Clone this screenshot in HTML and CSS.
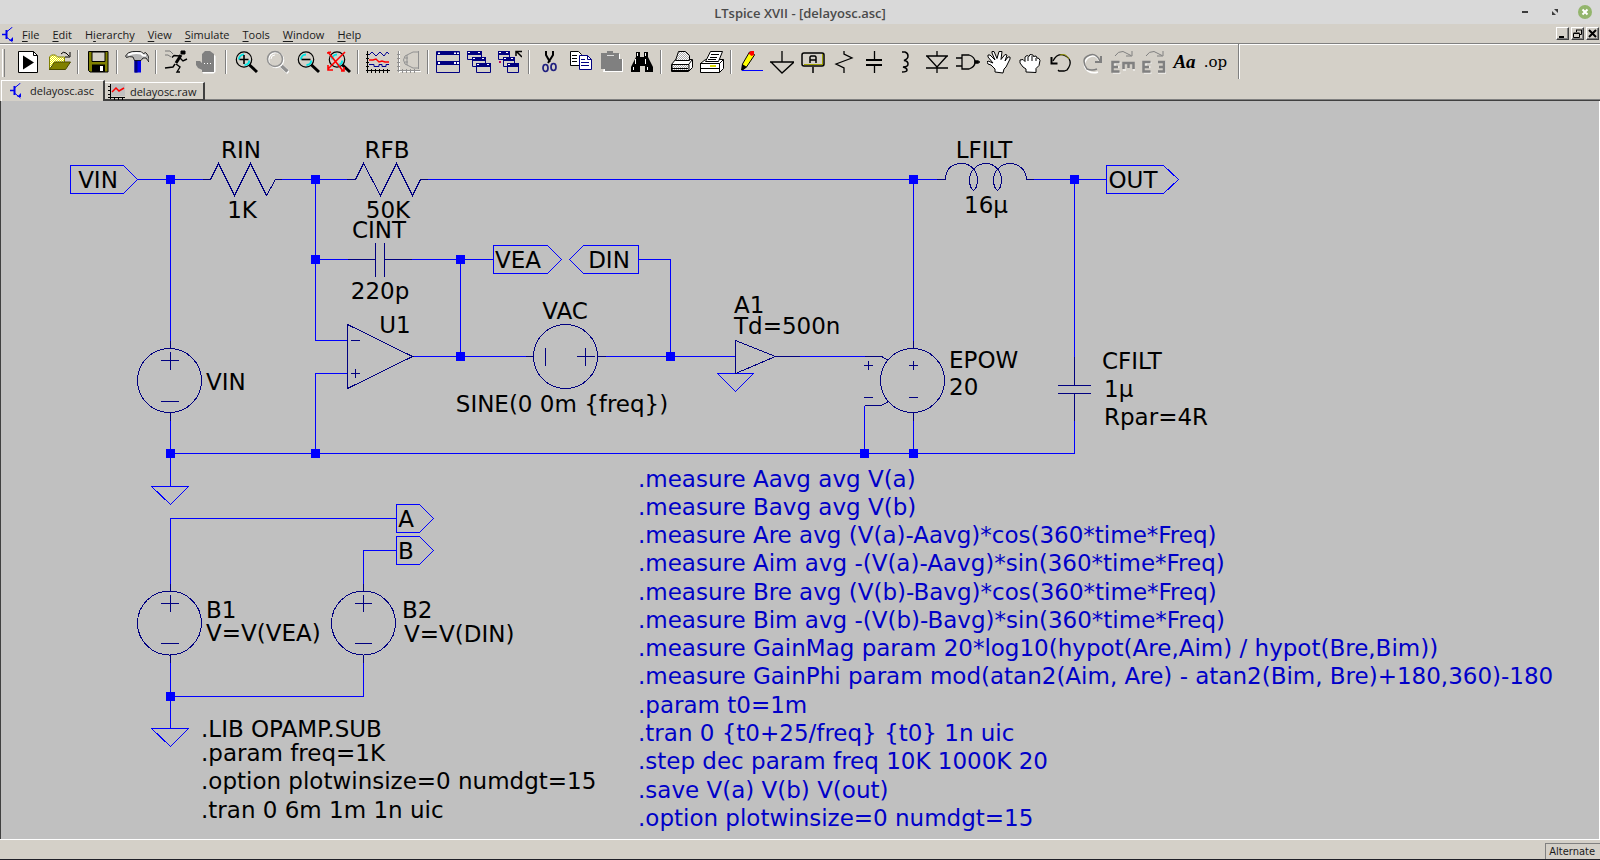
FILE: index.html
```html
<!DOCTYPE html>
<html lang="en">
<head>
<meta charset="utf-8">
<title>LTspice XVII - [delayosc.asc]</title>
<link rel="stylesheet" href="styles.css">
</head>
<body>
<header class="titlebar">
  <span class="titlebar-side"></span>
  <h1 class="title">LTspice XVII - [delayosc.asc]</h1>
  <div class="titlebar-side window-buttons">
    <button type="button" aria-label="Minimize"><svg width="14" height="14"><path d="M4 7h6" stroke="#3c3c3c" stroke-width="2"/></svg></button>
    <button type="button" aria-label="Restore"><svg width="14" height="14"><path d="M6 4h4v4zM4 6v4h4z" fill="#3c3c3c"/></svg></button>
    <button type="button" aria-label="Close"><svg width="14" height="14"><circle cx="7" cy="7" r="7" fill="#93b56c"/><path d="M4.500 4.500l5 5M9.500 4.500l-5 5" stroke="#fff" stroke-width="2"/></svg></button>
  </div>
</header>

<nav class="menubar" aria-label="Main menu">
  <svg class="doc-icon" width="14" height="16" viewBox="0 0 14 16"><use href="#transistor"/></svg>
  <button type="button"><u>F</u>ile</button>
  <button type="button"><u>E</u>dit</button>
  <button type="button">H<u>i</u>erarchy</button>
  <button type="button"><u>V</u>iew</button>
  <button type="button"><u>S</u>imulate</button>
  <button type="button"><u>T</u>ools</button>
  <button type="button"><u>W</u>indow</button>
  <button type="button"><u>H</u>elp</button>
  <div class="mdi-buttons">
    <button type="button" aria-label="Minimize document"><svg width="9" height="9"><path d="M1 7h5v2h-5z"/></svg></button>
    <button type="button" aria-label="Restore document"><svg width="9" height="9" fill="none" stroke="#000"><path d="M3.500 3V1M3 1h6M8.500 1v4.500H7"/><path d="M.5 4.500h6v4h-6zM.5 4h6"/></svg></button>
    <button type="button" aria-label="Close document"><svg width="9" height="9"><path d="M1 1l7 7M8 1l-7 7" stroke="#000" stroke-width="2"/></svg></button>
  </div>
</nav>

<svg class="defs" width="0" height="0" aria-hidden="true">
  <defs>
    <g id="transistor" fill="none" stroke="#0000f0">
      <path d="M0 7.500h4" stroke-width="1.500"/><path d="M4.500 3v9" stroke-width="2"/><path d="M4.500 5l6-5M4.500 10l6 5"/><path d="M7 14h4v-4z" fill="#0000f0" stroke="none"/>
    </g>
    <g id="lens-handle"><path d="M15 14.500l8 7.500" stroke="#000" stroke-width="3" fill="none"/></g>
    <g id="lens">
      <circle cx="10" cy="9.500" r="7.700" fill="#d4d0c8" stroke="#000" stroke-width="1.200"/>
      <path d="M5 9.500a5 5 0 0 1 5-5M10.500 15a5 5 0 0 0 4.800-4.500" stroke="#00e5e5" stroke-width="2" fill="none"/>
    </g>
    <pattern id="dots" width="2" height="2" patternUnits="userSpaceOnUse"><rect width="2" height="2" fill="#fff"/><path d="M0 0h1v1H0zM1 1h1v1H1z" fill="#aaa"/></pattern>
    <pattern id="yellow" width="2" height="2" patternUnits="userSpaceOnUse"><rect width="2" height="2" fill="#fff"/><path d="M0 0h1v1H0zM1 1h1v1H1z" fill="#f0f000"/></pattern>
  </defs>
</svg>

<div class="toolbar" role="toolbar" aria-label="Tools">
  <button type="button" aria-label="Run control"><svg class="icon"><path d="M2.500 1.500h15l4 4v17h-19z" fill="#fff" stroke="#000"/><path d="M17.500 1.500v4h4" fill="none" stroke="#000"/><path d="M7 5.500v14l11-7z"/></svg></button>
  <button type="button" aria-label="Open"><svg class="icon"><path d="M2.500 20V7l2-2h4l2 2h7v5" fill="url(#yellow)" stroke="#808000"/><path d="M2.500 19.500l5-7.500h16l-5 7.500z" fill="#808000" stroke="#4a4a00"/><path d="M14 4q2-3 5-1l3 3M23 2v5h-5" fill="none" stroke="#000"/></svg></button>
  <i class="sep"></i>
  <button type="button" aria-label="Save"><svg class="icon"><path d="M2.500 1.500h19.500v20.500h-18l-1.500-1.500z" fill="#808000" stroke="#000"/><path d="M6 2h13v9.500H6z" fill="#d4d0c8" stroke="#000"/><path d="M6 14.500h13v7.500H6z"/><path d="M14 16h3v5h-3z" fill="#fff"/></svg></button>
  <i class="sep"></i>
  <button type="button" aria-label="Control panel"><svg class="icon"><path d="M9.500 10h6.500v12.500h-6.500z" fill="#0000f0"/><path d="M9.500 10h3v12.500h-3z" fill="#000080"/><path d="M.5 6q2-4 7-4.500h8l3 2 2-1q4 3 3.500 9.500l-3-4h-3l-2 2.500H9.500L8 7Q4 6 1.500 7.500z" fill="#b4b4b4" stroke="#000" stroke-width=".8"/><path d="M3 5q6-3 13-1.500l2 2h3" stroke="#fff" stroke-width="2" fill="none"/></svg></button>
  <i class="sep"></i>
  <button type="button" aria-label="Run"><svg class="icon" fill="none" stroke="#000"><path d="M17 1h4v3h-4z" fill="#000"/><path d="M17 5l-5 8" stroke-width="3"/><path d="M16 6l-6-.5-2 2M16 8l3 3 4-2M11 14l-2 3-8 1M12 14l4 3-3 5h3" stroke-width="1.400"/><path d="M1 1h5l3 3M1 5h3l3 2" stroke="#777"/></svg></button>
  <button type="button" aria-label="Halt"><svg class="icon"><path d="M8 23.500l-1-3-5-4-.5-4h5l2 2V4l3-2h4l5 4v16l-2 1.500z" fill="#fff"/><path d="M7 22v-2l-4-2-2-3v-4h4l2 2V4l3-3h5l4 3v18z" fill="#808080"/><path d="M9 13.500h9" stroke="#fff" stroke-dasharray="1 2"/></svg></button>
  <i class="sep"></i>
  <button type="button" aria-label="Zoom in"><svg class="icon"><use href="#lens-handle"/><use href="#lens"/><path d="M5.500 9.500h9M10 5v9" stroke="#000" stroke-width="1.600"/></svg></button>
  <button type="button" aria-label="Pan"><svg class="icon" fill="none"><path d="M16 15.500l7.500 7" stroke="#fff" stroke-width="4"/><path d="M15 14.500l7.500 7" stroke="#909090" stroke-width="3.500"/><circle cx="11" cy="10" r="7.500" stroke="#fff" stroke-width="1.500"/><circle cx="10" cy="9" r="7.500" stroke="#909090" stroke-width="1.500"/><path d="M6 9a4 4 0 0 1 4-4" stroke="#fff"/></svg></button>
  <button type="button" aria-label="Zoom out"><svg class="icon"><use href="#lens-handle"/><use href="#lens"/><path d="M5.500 9.500h9" stroke="#000" stroke-width="1.600"/></svg></button>
  <button type="button" aria-label="Zoom full extents"><svg class="icon"><use href="#lens-handle"/><use href="#lens"/><path d="M1 2l15 19M18 2L1 19M0 3l4-1M1 15v5h5M14 21h3v-4" stroke="#f00" stroke-width="1.600" fill="none"/></svg></button>
  <i class="sep"></i>
  <button type="button" aria-label="Autorange"><svg class="icon" fill="none"><path d="M1.500 1v22M0 20.500h24M0 4.500h3M0 8.500h3M0 12.500h3M0 16.500h3M5.500 19v4M9.500 19v4M13.500 19v4M17.500 19v4M21.500 19v4" stroke="#000"/><path d="M3 5l3-3 4 4 4-4 4 4 3-4 2 2" stroke="#000090"/><path d="M3 10h4l3-1 3 3 3-1 3 1h4" stroke="#f00" stroke-width="1.500"/><path d="M3 14.500h5v2h5v-2h3v2h4v-2h3" stroke="#000090"/></svg></button>
  <button type="button" aria-label="Plot settings"><svg class="icon" fill="none" stroke="#fff"><path d="M2.500 1v22M1 21.500h23"/><path d="M1.500 1v21M0 20.500h23M0 4.500h3M0 8.500h3M0 12.500h3M0 16.500h3M5.500 19v4M9.500 19v4M13.500 19v4M17.500 19v4M21.500 1v18" stroke="#909090"/><path d="M21 2h-5l-8 4q-3 4 0 8l8 4h5M10 5v10M8 8h3M8 12h3" stroke="#909090"/></svg></button>
  <i class="sep"></i>
  <button type="button" aria-label="Tile windows"><svg class="icon"><path d="M.5 1.500h23v21H.5z" fill="#d4d0c8" stroke="#000080"/><path d="M1 2h22v3H1zM1 11h22v4H1z" fill="#000080"/><path d="M2 2.500h2v1.500H2zM18 2.500h2v1.500h-2zM21 2.500h2v1.500h-2zM2 12h2v2H2zM18 12h2v2h-2zM21 12h2v2h-2z" fill="#fff"/></svg></button>
  <button type="button" aria-label="Cascade windows"><svg class="icon"><g fill="#d4d0c8" stroke="#000080"><path d="M.5 1.500h14v8H.5z"/><path d="M5.500 7.500h13v9h-13z"/><path d="M9.500 13.500h14v9h-14z"/></g><path d="M0 1h15v4H0zM5 7h14v4H5zM9 13h15v4H9z" fill="#000080"/><path d="M1 2h2v1H1zM11 2h2v1h-2zM6 8h2v1H6zM15 8h2v1h-2zM10 14h2v1h-2zM20 14h2v1h-2z" fill="#fff"/></svg></button>
  <button type="button" aria-label="Close all windows"><svg class="icon"><g fill="#d4d0c8" stroke="#000080"><path d="M.5 1.500h11v8H.5z"/><path d="M5.500 7.500h11v9h-11z"/><path d="M9.500 13.500h11v9h-11z"/></g><path d="M0 1h12v4H0zM5 7h12v4H5zM9 13h12v4H9z" fill="#000080"/><path d="M1 2h2v1H1zM8 2h2v1H8zM6 8h2v1H6zM13 8h2v1h-2zM10 14h2v1h-2z" fill="#fff"/><path d="M1 11h2v2H1z" fill="#c00060"/><path d="M24 7l-5-5M18 6V1.500h6" fill="none" stroke="#000" stroke-width="1.500"/></svg></button>
  <i class="sep"></i>
  <button type="button" aria-label="Cut"><svg class="icon" fill="none"><path d="M9 1v4l4 7M16 1v4l-5 8" stroke="#000" stroke-width="2"/><ellipse cx="8.500" cy="18" rx="2.500" ry="3.500" stroke="#202080" stroke-width="1.700"/><ellipse cx="16.500" cy="17" rx="2.500" ry="3.500" stroke="#202080" stroke-width="1.700"/></svg></button>
  <button type="button" aria-label="Copy"><svg class="icon" fill="#fff"><path d="M2.500 1.500h8l3 3v11h-11z" stroke="#000"/><path d="M4 5.500h5M4 8.500h5M4 11.500h5" stroke="#000"/><path d="M11.500 5.500h8l4 4v10h-12z" stroke="#000080"/><path d="M19.500 5.500v4h4M13 9.500h4M13 12.500h8M13 15.500h8" stroke="#000080" fill="none"/></svg></button>
  <button type="button" aria-label="Paste"><svg class="icon"><path d="M4 22h20V9h-3V4H8" fill="#fff"/><path d="M2 3h6V1h6v2h6v6h3v12H6v-2H2z" fill="#808080"/><path d="M8 5.500h7" stroke="#ddd"/></svg></button>
  <button type="button" aria-label="Find"><svg class="icon"><path d="M6 2h4v5h4V2h4v5l3 6 2 4v5h-8v-6h-5v6H1v-5l2-4 3-6z"/><path d="M7 3h1v3H7zM15 3h1v3h-1zM5 9h1v5H5zM15 9h1v5h-1zM3 17h1v3H3zM17 17h1v3h-1z" fill="#fff"/></svg></button>
  <i class="sep"></i>
  <button type="button" aria-label="Print"><svg class="icon" stroke="#000"><path d="M2.500 14.500l4-5h17v8l-4 4h-17z" fill="#fff"/><path d="M6.500 10.500l3-9h7l4 4v5z" fill="url(#dots)"/><path d="M3 14.500h17v6H3z" fill="url(#dots)"/><path d="M3 18.500h16M20 14l3-4" fill="none"/></svg></button>
  <button type="button" aria-label="Print setup"><svg class="icon" stroke="#000"><path d="M.5 13.500l5-4h18v9l-4 4H.5z" fill="#fff"/><path d="M5.500 11.500l5-10h12l-4 10z" fill="#fff"/><path d="M11 4.500h8M10 7.500h7M8 9.500h8M0 13.500h19.500v9M19.500 13.500l4-4M0 18.500h19" fill="none"/><path d="M10 16h6" stroke="#d8d800" stroke-width="2"/></svg></button>
  <i class="sep"></i>
  <button type="button" aria-label="Draw wire"><svg class="icon"><path d="M2.500 20l1-6 7-12h3l2 3-8 12z" fill="#ff0" stroke="#000"/><path d="M3 14l5 3-5 4z"/><path d="M9.500 3.500L12 1h3v4l-2.500 1z" fill="#f00"/><path d="M3 20.500h21" stroke="#00f"/></svg></button>
  <button type="button" aria-label="Ground"><svg class="icon" fill="none" stroke="#000" stroke-width="1.300"><path d="M12 1v11M0 12h24l-12 11L1 12"/></svg></button>
  <button type="button" aria-label="Label net"><svg class="icon" fill="none"><rect x="1" y="3" width="22" height="13" rx="2" stroke="#000" stroke-width="1.500"/><path d="M21.500 4v11M3 14.500h18" stroke="#a0a000"/><path d="M9 13V7l1-1h4l1 1v6M9 10h6M12 17v6" stroke="#000" stroke-width="1.500"/></svg></button>
  <button type="button" aria-label="Resistor"><svg class="icon" fill="none" stroke="#000" stroke-width="1.300"><path d="M12 1v3l8 4-16 6 8 4v5"/></svg></button>
  <button type="button" aria-label="Capacitor"><svg class="icon" fill="none" stroke="#000" stroke-width="2"><path d="M3 10h16M3 15h16"/><path d="M11.500 1v9M11.500 15v8" stroke-width="1.300"/></svg></button>
  <button type="button" aria-label="Inductor"><svg class="icon" fill="none" stroke="#000" stroke-width="1.500"><path d="M8 2h3q3 1 3 4t-4 4.500q4 .5 4 3.500t-5 3q4 1 4 3t-5 2"/></svg></button>
  <button type="button" aria-label="Diode"><svg class="icon" fill="none" stroke="#000" stroke-width="1.300"><path d="M12 1v5M1 6h22M2 6l10 11L22 6M1 18h22M12 18v5"/></svg></button>
  <button type="button" aria-label="Component"><svg class="icon" fill="none" stroke="#000" stroke-width="1.300"><path d="M6 5h7q6 2 6 7t-6 7H6zM0 8h6M0 16h6M19 12h5"/><path d="M19 11h3v2h-3z" fill="#000"/></svg></button>
  <button type="button" aria-label="Move"><svg class="icon"><path d="M8 22v-3l-4-4-3-1-1-2 1-1 5 2-5-6V5h2l5 5-3-7V1.500h2l3 7 2-7h3l-1 8 4-5 2 .5-2 6 3-4h2v2l-4 8-2 2-1 4z" fill="#fff" stroke="#000"/></svg></button>
  <button type="button" aria-label="Drag"><svg class="icon"><path d="M8 22v-3l-3-2-3-4v-3l3-.5 2 2V7l2-1.500 2 1 1-2 3 .5.500 1.500 2.500-.5 1 2 2 .5 1 2-1 5-3 3v4z" fill="#fff" stroke="#000"/><path d="M10 7v4M14 6v5M18 8v3" stroke="#000"/></svg></button>
  <button type="button" aria-label="Undo"><svg class="icon" fill="none"><path d="M4 11q4-8 10-6t7 6-3 9l-3 1h-5l-1-1" stroke="#000" stroke-width="1.300"/><path d="M11 5q6-2 9 4" stroke="#909000"/><path d="M2.500 7v6.500h6" stroke="#000" stroke-width="2"/></svg></button>
  <button type="button" aria-label="Redo"><svg class="icon" fill="none"><path d="M20 12q-3-7-8-6t-7 6 3 9q5 3 10 1" stroke="#fff" stroke-width="1.500"/><path d="M20 11q-4-8-10-6t-6 6 3 8q5 2 10 0" stroke="#808080" stroke-width="1.500"/><path d="M21 6v6h-6" stroke="#808080" stroke-width="2"/></svg></button>
  <button type="button" aria-label="Rotate"><svg class="icon" fill="none"><path d="M2 23h7.500M9.500 13H4v4h4.500M25 13v7h-3M12 20h3" stroke="#fff"/><path d="M8.500 12H1.500v9.500h7M2 17h5M12.500 19v-6h10v6M17.500 12v6" stroke="#808080" stroke-width="2.500"/><path d="M4 6q3-5 8-4.500l8 4M21 1v5h-6" stroke="#808080"/></svg></button>
  <button type="button" aria-label="Mirror"><svg class="icon" fill="none"><path d="M2 23h7.500M9.500 13H4v4h4.500M24 11v12h-8" stroke="#fff"/><path d="M8.500 12H1.500v9.500h7M2 17h5M16 12h6v9.500h-6M22 17h-5" stroke="#808080" stroke-width="2.500"/><path d="M4 6q3-5 8-4.500l8 4M21 1v5h-6" stroke="#808080"/></svg></button>
  <button type="button" class="glyph glyph-text">Aa</button>
  <button type="button" class="glyph">.op</button>
  <i class="sep sep-end"></i>
</div>

<div class="tabs" role="tablist">
  <button type="button" class="tab tab-active" role="tab" aria-selected="true"><svg width="14" height="16" viewBox="0 0 14 16"><use href="#transistor"/></svg>delayosc.asc</button>
  <button type="button" class="tab" role="tab" aria-selected="false"><svg width="17" height="16" fill="none"><path d="M3 0h14v12H3z" fill="#c0c0c0"/><path d="M2.500 0v15M0 13.500h17M0 2.500h3M0 6.500h3M0 10.500h3M6.500 13v3M10.500 13v3M14.500 13v3" stroke="#000"/><path d="M4 8l4-4 3 3 5-3" stroke="#f00" stroke-width="1.500"/></svg>delayosc.raw</button>
  <span class="tab-rest"></span>
</div>

<main class="canvas">
<svg class="schematic" viewBox="2 101 1596 738" preserveAspectRatio="xMinYMin meet" role="img" aria-label="delayosc schematic">
  <g class="wire">
    <path d="M137.500 179.500H203M282 179.500H347M428 179.500H937M1034 179.500H1106.500"/>
    <path d="M170.500 179.500V341M170.500 421V486.500M170.500 453.500H1074.500V421M1074.500 179.500V357"/>
    <path d="M315.500 179.500V340.500H347M347 373.500H315.500V453.500M315.500 259.500H348M412 259.500H493.500M460.500 259.500V356.500"/>
    <path d="M412.500 356.500H526M606 356.500H735M638.500 259.500H670.500V356.500M800 356.500H865"/>
    <path d="M864.500 405.500V453.500M913.500 179.500V341M913.500 421V453.500"/>
    <path d="M396.500 518.500H170.500V584M396.500 550.500H363.500V584M170.500 663V728.500M170.500 696.500H363.500V663"/>
    <path d="M151.500 486.500h37l-18 18zM151.500 728.500h37l-18 18zM717.500 373.500h36l-18 18z"/>
    <path d="M70.500 165.500H123.500L137.500 179.500L123.500 193.500H70.500zM1106.500 165.500H1163.500L1178.500 179.500L1163.500 193.500H1106.500z"/>
    <path d="M493.500 245.500H547.500L561.500 259.500L547.500 273.500H493.500zM638.500 245.500H583.500L569.500 259.500L583.500 273.500H638.500z"/>
    <path d="M396.500 504.500H419.500L433.500 518.500L419.500 532.500H396.500zM396.500 536.500H419.500L433.500 550.500L419.500 564.500H396.500z"/>
  </g>
  <g class="symbol">
    <path d="M203 179.500H210.500L218.500 163.500L234.500 195.500L250.500 163.500L266.500 195.500L275.500 179.500H282"/>
    <path d="M347 179.500H355.500L363.500 163.500L380.500 195.500L396.500 163.500L412.500 195.500L420.500 179.500H428"/>
    <path d="M348 259.500H375.500M375.500 243V277M384.500 243V277M384.500 259.500H412"/>
    <path d="M347.500 324.500V388.500L412.500 356.500zM351 340.500h9M351 373.500h9M355.500 369v9"/>
    <circle cx="169.500" cy="380.500" r="32"/><path d="M170.500 341v8M170.500 413v8M161 360.500h18M170.500 352v18M161 401.500h18"/>
    <circle cx="565.500" cy="356.500" r="32"/><path d="M526 356.500h8M598 356.500h8M545.500 348v18M577 356.500h18M585.500 348v18"/>
    <path d="M735.500 340.500V373.500L775.500 356.500zM775.500 356.500H800"/>
    <circle cx="912.500" cy="380.500" r="32"/><path d="M913.500 341v8M913.500 413v8M909 365.500h9M913.500 361v9M909 397.500h9"/>
    <path d="M865 356.500H881.500L888.500 360.500M888.500 401.500L881.500 405.500H864.500M864 365.500h9M868.500 361v9M864 397.500h9"/>
    <path d="M937 179.500H945.500C945.500 168 953 163.500 961.500 163.500C972 163.500 977.500 172 977.500 180C977.500 186 975 190.500 973.500 190.500C972 190.500 969.500 186 969.500 180C969.500 171 977 163.500 985.500 163.500C996 163.500 1001.500 172 1001.500 180C1001.500 186 999 190.500 997.500 190.500C996 190.500 993.500 186 993.500 180C993.500 171 1001 163.500 1009.500 163.500C1020 163.500 1026.500 171 1026.500 179.500H1034"/>
    <path d="M1074.500 357V385.500M1058 385.500h33M1058 393.500h33M1074.500 393.500V421"/>
    <circle cx="169.500" cy="623" r="32"/><path d="M170.500 584v8M170.500 655v8M161 603.500h18M170.500 595v17M161 643.500h18"/>
    <circle cx="363.500" cy="623" r="32"/><path d="M363.500 584v8M363.500 655v8M355 603.500h17M363.500 595v17M355 643.500h17"/>
  </g>
  <path class="node" d="M166 175h9v9h-9zM311 175h9v9h-9zM909 175h9v9h-9zM1070 175h9v9h-9zM311 255h9v9h-9zM456 255h9v9h-9zM456 352h9v9h-9zM666 352h9v9h-9zM166 449h9v9h-9zM311 449h9v9h-9zM860 449h9v9h-9zM909 449h9v9h-9zM166 692h9v9h-9z"/>
  <g class="label centred">
    <text x="98" y="188">VIN</text><text x="241" y="158">RIN</text><text x="242" y="218">1K</text>
    <text x="387" y="158">RFB</text><text x="388" y="218">50K</text><text x="379" y="238">CINT</text>
    <text x="380" y="299">220p</text><text x="395" y="333">U1</text>
    <text x="518" y="268">VEA</text><text x="609" y="268">DIN</text><text x="565" y="319">VAC</text>
    <text x="562" y="412">SINE(0 0m {freq})</text>
    <text x="984" y="158">LFILT</text><text x="986" y="213">16µ</text><text x="1133" y="188">OUT</text>
    <text x="406" y="527">A</text><text x="406" y="559">B</text>
  </g>
  <g class="label">
    <text x="206" y="390">VIN</text><text x="734" y="313">A1</text><text x="734" y="334">Td=500n</text>
    <text x="949" y="368">EPOW</text><text x="949" y="395">20</text>
    <text x="1102" y="369">CFILT</text><text x="1104" y="397">1µ</text><text x="1104" y="425">Rpar=4R</text>
    <text x="206" y="618">B1</text><text x="206" y="641">V=V(VEA)</text><text x="402" y="618">B2</text><text x="404" y="642">V=V(DIN)</text>
    <text x="201" y="737">.LIB OPAMP.SUB</text><text x="201" y="761">.param freq=1K</text>
    <text x="201" y="789">.option plotwinsize=0 numdgt=15</text><text x="201" y="818">.tran 0 6m 1m 1n uic</text>
  </g>
  <g class="label directive">
    <text x="638" y="487">.measure Aavg avg V(a)</text>
    <text x="638" y="515">.measure Bavg avg V(b)</text>
    <text x="638" y="543">.measure Are avg (V(a)-Aavg)*cos(360*time*Freq)</text>
    <text x="638" y="571">.measure Aim avg -(V(a)-Aavg)*sin(360*time*Freq)</text>
    <text x="638" y="600">.measure Bre avg (V(b)-Bavg)*cos(360*time*Freq)</text>
    <text x="638" y="628">.measure Bim avg -(V(b)-Bavg)*sin(360*time*Freq)</text>
    <text x="638" y="656">.measure GainMag param 20*log10(hypot(Are,Aim) / hypot(Bre,Bim))</text>
    <text x="638" y="684">.measure GainPhi param mod(atan2(Aim, Are) - atan2(Bim, Bre)+180,360)-180</text>
    <text x="638" y="713">.param t0=1m</text>
    <text x="638" y="741">.tran 0 {t0+25/freq} {t0} 1n uic</text>
    <text x="638" y="769">.step dec param freq 10K 1000K 20</text>
    <text x="638" y="798">.save V(a) V(b) V(out)</text>
    <text x="638" y="826">.option plotwinsize=0 numdgt=15</text>
  </g>
</svg>
</main>

<footer class="statusbar"><span class="status-cell">Alternate</span></footer>
</body>
</html>
```
FILE: styles.css
```css
* { box-sizing: border-box; }

body {
  margin: 0;
  height: 100vh;
  display: flex;
  flex-direction: column;
  background: #d4d0c8;
  color: #1a1a1a;
  font: 11px/16px "Open Sans", "Noto Sans", sans-serif;
  overflow: hidden;
}

button {
  margin: 0;
  padding: 0;
  border: 0;
  background: none;
  color: inherit;
  font: inherit;
}

svg { display: block; }
.defs { position: absolute; }

.titlebar {
  display: flex;
  align-items: center;
  height: 24px;
  padding: 0 8px;
  background: #d9d9d9;
}
.titlebar-side { flex: 1; }
.title {
  margin: 0;
  padding-top: 2px;
  color: #4a4a4a;
  font-size: 13px;
  font-weight: 600;
}
.window-buttons {
  display: flex;
  justify-content: flex-end;
  gap: 16px;
}

.menubar {
  display: flex;
  align-items: center;
  gap: 13px;
  height: 21px;
  padding: 1px 1px 0 2px;
  border-bottom: 1px solid #fff;
  box-shadow: inset 0 -1px #808080;
}
.menubar u { text-underline-offset: 2px; }
.doc-icon { margin-right: -7px; }
.mdi-buttons {
  display: flex;
  gap: 2px;
  margin-left: auto;
  padding-bottom: 3px;
}
.mdi-buttons button {
  width: 13px;
  height: 13px;
  padding: 1px;
  border: 1px solid;
  border-color: #fff #404040 #404040 #fff;
  box-shadow: inset -1px -1px #808080;
}

.toolbar {
  display: flex;
  align-items: center;
  height: 35px;
  padding: 0 0 2px 12px;
  background: linear-gradient(#fff, #fff) 2px 4px / 1px 28px no-repeat, linear-gradient(#808080, #808080) 4px 4px / 1px 28px no-repeat;
}
.toolbar button {
  flex: none;
  display: grid;
  place-items: center;
  width: 31px;
  height: 28px;
}
.icon { width: 24px; height: 24px; }
.sep {
  flex: none;
  width: 2px;
  height: 24px;
  margin: 0 3px;
  border-left: 1px solid #808080;
  border-right: 1px solid #fff;
}
.sep-end { height: 35px; margin-left: 7px; }
.toolbar .glyph { font: 15px/24px "DejaVu Serif", serif; color: #000; }
.toolbar .glyph-text { font: italic bold 19px/24px "Liberation Serif", serif; }

.tabs {
  display: flex;
  align-items: flex-end;
  height: 21px;
  padding-left: 1px;
}
.tab {
  display: flex;
  align-items: center;
  gap: 5px;
  height: 19px;
  padding: 1px 7px 0 3px;
  border-top: 1px solid #fff;
  border-right: 2px solid #404040;
  border-bottom: 2px solid #404040;
}
.tab-active {
  height: 21px;
  gap: 6px;
  padding: 0 9px 1px 8px;
  border-left: 1px solid #fff;
  border-bottom: 0;
}
.tab-rest {
  flex: 1;
  border-bottom: 1px solid #404040;
  box-shadow: 0 -1px #808080;
}

.canvas {
  flex: 1;
  min-height: 0;
  padding: 0 1px;
  border-left: 1px solid #404040;
  border-right: 1px solid #fff;
  background: #c0c0c0;
}
.schematic { width: 100%; height: 100%; }
.wire, .symbol {
  fill: none;
  stroke: #00f;
  shape-rendering: crispEdges;
}
.symbol { stroke: #000080; }
.node { fill: #00f; }
.label { font: 23px "DejaVu Sans", sans-serif; fill: #000; }
.centred { text-anchor: middle; }
.directive { fill: #0000c8; }

.statusbar {
  display: flex;
  justify-content: flex-end;
  height: 21px;
  padding-top: 3px;
  border-top: 1px solid #fff;
  border-bottom: 1px solid #202028;
}
.status-cell {
  padding: 0 5px 0 3px;
  border: 1px solid #808080;
  border-width: 1px 0 0 1px;
  font: 11px/16px "DejaVu Sans Condensed", "DejaVu Sans", sans-serif;
}
```
